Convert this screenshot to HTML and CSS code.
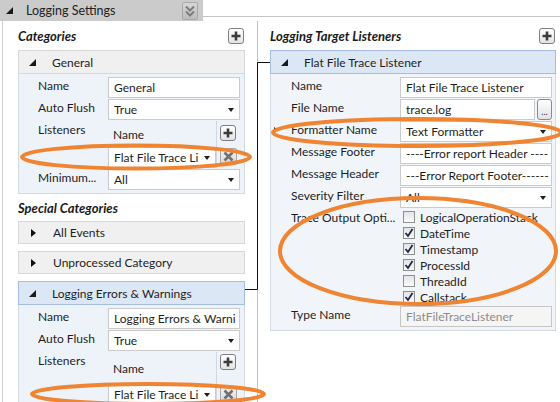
FILE: index.html
```html
<!DOCTYPE html>
<html lang="en">
<head>
    <meta charset="UTF-8">
    <meta name="viewport" content="width=device-width, initial-scale=1.0">
    <title>Logging Settings</title>
    <link rel="stylesheet" href="styles.css">
</head>
<body>
    <div class="designer">
        <div class="topbar">
            <div class="section-tab">
                <span class="expander open"></span>
                <span class="section-title">Logging Settings</span>
                <button class="collapse-btn" title="Collapse">
                    <svg width="10" height="12" viewBox="0 0 10 12"><path d="M1 1.5l4 4 4-4M1 6.5l4 4 4-4" fill="none" stroke="#7d7d7d" stroke-width="2"/></svg>
                </button>
            </div>
            <div class="topbar-rule"></div>
        </div>

        <div class="columns">
            <!-- categories -->
            <section class="column column-left">
                <div class="column-head">
                    <h2>Categories</h2>
                    <button class="icon-btn add-btn" title="Add">
                        <svg width="10" height="10" viewBox="0 0 10 10"><path d="M5 0.5v9M0.5 5h9" stroke="#3c3c3c" stroke-width="2.6"/></svg>
                    </button>
                </div>

                <div class="element">
                    <div class="element-header"><span class="expander open"></span>General</div>
                    <div class="props">
                        <label>Name</label>
                        <div class="field">General</div>
                        <label>Auto Flush</label>
                        <div class="field select"><span>True</span><i class="caret"></i></div>
                        <label>Listeners</label>
                        <div class="listeners">
                            <div class="listeners-head">Name</div>
                            <div class="listeners-tool">
                                <button class="icon-btn add-btn" title="Add">
                                    <svg width="10" height="10" viewBox="0 0 10 10"><path d="M5 0.5v9M0.5 5h9" stroke="#3c3c3c" stroke-width="2.6"/></svg>
                                </button>
                            </div>
                            <div class="field select"><span>Flat File Trace Li</span><i class="caret"></i></div>
                            <div class="listeners-tool">
                                <button class="icon-btn remove-btn" title="Remove">
                                    <svg width="11" height="11" viewBox="0 0 11 11"><path d="M1.5 1.5l8 8M9.5 1.5l-8 8" stroke="#707070" stroke-width="2.6"/></svg>
                                </button>
                            </div>
                        </div>
                        <label>Minimum...</label>
                        <div class="field select"><span>All</span><i class="caret"></i></div>
                    </div>
                </div>

                <h2 class="sub-head">Special Categories</h2>

                <div class="element-header closed-item"><span class="expander closed"></span>All Events</div>
                <div class="element-header closed-item"><span class="expander closed"></span>Unprocessed Category</div>

                <div class="element">
                    <div class="element-header selected"><span class="expander open"></span>Logging Errors &amp; Warnings</div>
                    <div class="props">
                        <label>Name</label>
                        <div class="field">Logging Errors &amp; Warni</div>
                        <label>Auto Flush</label>
                        <div class="field select"><span>True</span><i class="caret"></i></div>
                        <label>Listeners</label>
                        <div class="listeners tall">
                            <div class="listeners-head">Name</div>
                            <div class="listeners-tool">
                                <button class="icon-btn add-btn" title="Add">
                                    <svg width="10" height="10" viewBox="0 0 10 10"><path d="M5 0.5v9M0.5 5h9" stroke="#3c3c3c" stroke-width="2.6"/></svg>
                                </button>
                            </div>
                            <div class="field select"><span>Flat File Trace Li</span><i class="caret"></i></div>
                            <div class="listeners-tool">
                                <button class="icon-btn remove-btn" title="Remove">
                                    <svg width="11" height="11" viewBox="0 0 11 11"><path d="M1.5 1.5l8 8M9.5 1.5l-8 8" stroke="#707070" stroke-width="2.6"/></svg>
                                </button>
                            </div>
                        </div>
                    </div>
                </div>
            </section>

            <!-- listeners -->
            <section class="column column-right">
                <div class="column-head">
                    <h2>Logging Target Listeners</h2>
                    <button class="icon-btn add-btn" title="Add">
                        <svg width="10" height="10" viewBox="0 0 10 10"><path d="M5 0.5v9M0.5 5h9" stroke="#3c3c3c" stroke-width="2.6"/></svg>
                    </button>
                </div>

                <div class="element">
                    <div class="element-header selected"><span class="expander open"></span>Flat File Trace Listener</div>
                    <div class="props props-wide">
                        <label>Name</label>
                        <div class="field">Flat File Trace Listener</div>
                        <label>File Name</label>
                        <div class="file-row">
                            <div class="field">trace.log</div>
                            <button class="browse-btn" title="Browse">...</button>
                        </div>
                        <label class="current">Formatter Name</label>
                        <div class="field select"><span>Text Formatter</span><i class="caret"></i></div>
                        <label>Message Footer</label>
                        <div class="field">----Error report Header ----</div>
                        <label>Message Header</label>
                        <div class="field">---Error Report Footer------</div>
                        <label>Severity Filter</label>
                        <div class="field select"><span>All</span><i class="caret"></i></div>
                        <label>Trace Output Opti...</label>
                        <div class="options">
                            <div class="option"><span class="check"></span>LogicalOperationStack</div>
                            <div class="option"><span class="check"><svg width="10" height="10" viewBox="0 0 10 10"><path d="M1.5 5l2.5 3 4.5-7" fill="none" stroke="#1d2b4f" stroke-width="1.8"/></svg></span>DateTime</div>
                            <div class="option"><span class="check"><svg width="10" height="10" viewBox="0 0 10 10"><path d="M1.5 5l2.5 3 4.5-7" fill="none" stroke="#1d2b4f" stroke-width="1.8"/></svg></span>Timestamp</div>
                            <div class="option"><span class="check"><svg width="10" height="10" viewBox="0 0 10 10"><path d="M1.5 5l2.5 3 4.5-7" fill="none" stroke="#1d2b4f" stroke-width="1.8"/></svg></span>ProcessId</div>
                            <div class="option"><span class="check"></span>ThreadId</div>
                            <div class="option"><span class="check"><svg width="10" height="10" viewBox="0 0 10 10"><path d="M1.5 5l2.5 3 4.5-7" fill="none" stroke="#1d2b4f" stroke-width="1.8"/></svg></span>Callstack</div>
                        </div>
                        <label>Type Name</label>
                        <div class="field disabled">FlatFileTraceListener</div>
                    </div>
                </div>
            </section>
        </div>

        <!-- link lines between a category and its listener -->
        <svg class="wires" width="560" height="402">
            <path d="M270 62.5H257.5V289.5H245" fill="none" stroke="#111" stroke-width="1"/>
        </svg>

        <!-- highlight rings -->
        <svg class="rings" width="560" height="402">
            <g fill="none" stroke="#ef8433" stroke-width="4">
                <ellipse cx="136" cy="157" rx="114" ry="11.5"/>
                <ellipse cx="417" cy="132.5" rx="144" ry="13.5"/>
                <ellipse cx="418" cy="251" rx="138" ry="53"/>
                <ellipse cx="148" cy="394" rx="116" ry="10"/>
            </g>
        </svg>
    </div>
</body>
</html>
```

FILE: styles.css
```css
* {
    box-sizing: border-box;
}

body {
    margin: 0;
    background: #fff;
    font-family: 'Lato', 'Segoe UI', sans-serif;
    font-size: 12px;
    color: #1e1e1e;
    overflow: hidden;
}

button {
    font-family: inherit;
    padding: 0;
    cursor: pointer;
}

.designer {
    position: relative;
    width: 560px;
    height: 402px;
    overflow: hidden;
}

/* top section tab */
.topbar {
    display: flex;
    height: 21px;
}

.section-tab {
    width: 203px;
    background: #cbcbcb;
    display: flex;
    align-items: center;
    padding-left: 6px;
}

.section-tab .expander {
    margin-right: 13px;
}

.section-title {
    flex: 1;
    font-size: 12.5px;
    color: #222;
}

.collapse-btn {
    width: 16px;
    height: 18px;
    margin-right: 5px;
    border: 1px solid #a9a9a9;
    border-radius: 2px;
    background: linear-gradient(#d6d6d6, #bdbdbd);
    display: flex;
    align-items: center;
    justify-content: center;
}

.topbar-rule {
    flex: 1;
    height: 17px;
    border-bottom: 1px solid #c4c4c4;
}

/* expand / collapse triangles */
.expander {
    display: inline-block;
    width: 0;
    height: 0;
}

.expander.open {
    border-left: 7px solid transparent;
    border-bottom: 7px solid #1a1a1a;
}

.expander.closed {
    border-top: 4.5px solid transparent;
    border-bottom: 4.5px solid transparent;
    border-left: 5px solid #111;
}

/* columns */
.columns {
    display: flex;
    height: 381px;
}

.column-left {
    width: 256px;
    margin-left: 2px;
    border-left: 1px solid #cdcdcd;
    border-right: 1px solid #c4c4c4;
    padding: 7px 12px 0 15px;
}

.column-right {
    flex: 1;
    padding: 7px 4px 0 12px;
}

.column-head {
    display: flex;
    align-items: center;
    justify-content: space-between;
    height: 16px;
    margin-bottom: 6px;
}

h2 {
    margin: 0;
    font-size: 13px;
    font-weight: bold;
    font-style: italic;
    color: #1a1a1a;
}

.sub-head {
    margin: 6px 0 5px;
    line-height: 16px;
}

/* small square buttons */
.icon-btn {
    display: flex;
    align-items: center;
    justify-content: center;
    border-radius: 3px;
}

.add-btn {
    width: 16px;
    height: 16px;
    margin-right: 1px;
    border: 1px solid #7f7f7f;
    background: linear-gradient(#ffffff, #e3e3e3);
}

.remove-btn {
    width: 17px;
    height: 17px;
    border: 1px solid #a8a8a8;
    border-radius: 2px;
    background: linear-gradient(#f4f4f4, #d8d8d8);
}

/* element cards */
.element-header {
    height: 24px;
    display: flex;
    align-items: center;
    padding-left: 10px;
    background: #f0f0f0;
    border: 1px solid #d8d8d8;
    font-size: 12px;
}

.element-header .expander {
    margin-right: 16px;
}

.element-header.selected {
    background: #dce7f5;
    border-color: #a4bde0;
}

.closed-item {
    height: 23px;
    margin-bottom: 7px;
    padding-left: 12px;
}

.closed-item .expander {
    margin-right: 17px;
}

.props {
    display: grid;
    grid-template-columns: 70px 1fr;
    row-gap: 1px;
    padding: 3px 4px 3px 19px;
    background: #eef3f9;
    border: 1px solid #d3dae3;
    border-top: 0;
}

.props-wide {
    grid-template-columns: 109px 1fr;
    padding: 3px 3px 3px 20px;
    background: #f1f5fa;
}

.props label {
    position: relative;
    line-height: 18px;
    white-space: nowrap;
    overflow: hidden;
}

.props label.current {
    overflow: visible;
}

/* row marker in front of the active property */
.props label.current::before {
    content: '';
    position: absolute;
    left: -17px;
    top: 6px;
    border-top: 3px solid transparent;
    border-bottom: 3px solid transparent;
    border-left: 4px solid #222;
}

.field {
    height: 21px;
    display: flex;
    align-items: center;
    padding: 0 5px;
    background: #fff;
    border: 1px solid #cbcbcb;
    white-space: nowrap;
    overflow: hidden;
}

.field.select span {
    flex: 1;
    overflow: hidden;
}

.caret {
    width: 0;
    height: 0;
    margin-left: 4px;
    border-left: 3.5px solid transparent;
    border-right: 3.5px solid transparent;
    border-top: 4px solid #1e1e1e;
}

.field.disabled {
    background: #f5f5f5;
    border-color: #c6c6c6;
    color: #8c8c8c;
}

/* listener collection editor */
.listeners {
    display: grid;
    grid-template-columns: 1fr 24px;
    grid-template-rows: 26px 21px;
}

.listeners.tall {
    grid-template-rows: 32px 21px;
}

.listeners-head {
    display: flex;
    align-items: center;
    padding-left: 5px;
}

.listeners-tool {
    display: flex;
    justify-content: flex-end;
    align-items: flex-start;
    padding: 4px 3px 0 0;
    border-left: 1px solid #d4d8de;
}

.listeners-tool + .field + .listeners-tool {
    padding-top: 1px;
}

.listeners.tall .listeners-tool {
    padding-top: 2px;
}

/* file name with browse button */
.file-row {
    display: flex;
    gap: 2px;
}

.file-row .field {
    flex: 1;
}

.browse-btn {
    width: 15px;
    height: 21px;
    border: 1px solid #8a8a8a;
    border-radius: 3px;
    background: linear-gradient(#ffffff, #e2e2e2);
    font-size: 9px;
    line-height: 1;
    display: flex;
    align-items: flex-end;
    justify-content: center;
    padding-bottom: 3px;
    color: #333;
}

/* trace option check list */
.options {
    display: flex;
    flex-direction: column;
    padding-left: 3px;
}

.option {
    height: 16px;
    display: flex;
    align-items: center;
}

.check {
    width: 12px;
    height: 12px;
    margin-right: 5px;
    border: 1px solid #8e8f8f;
    background: linear-gradient(#e3e3e3, #fbfbfb);
    display: flex;
    align-items: center;
    justify-content: center;
}

/* overlays */
.wires,
.rings {
    position: absolute;
    left: 0;
    top: 0;
    pointer-events: none;
}
```
